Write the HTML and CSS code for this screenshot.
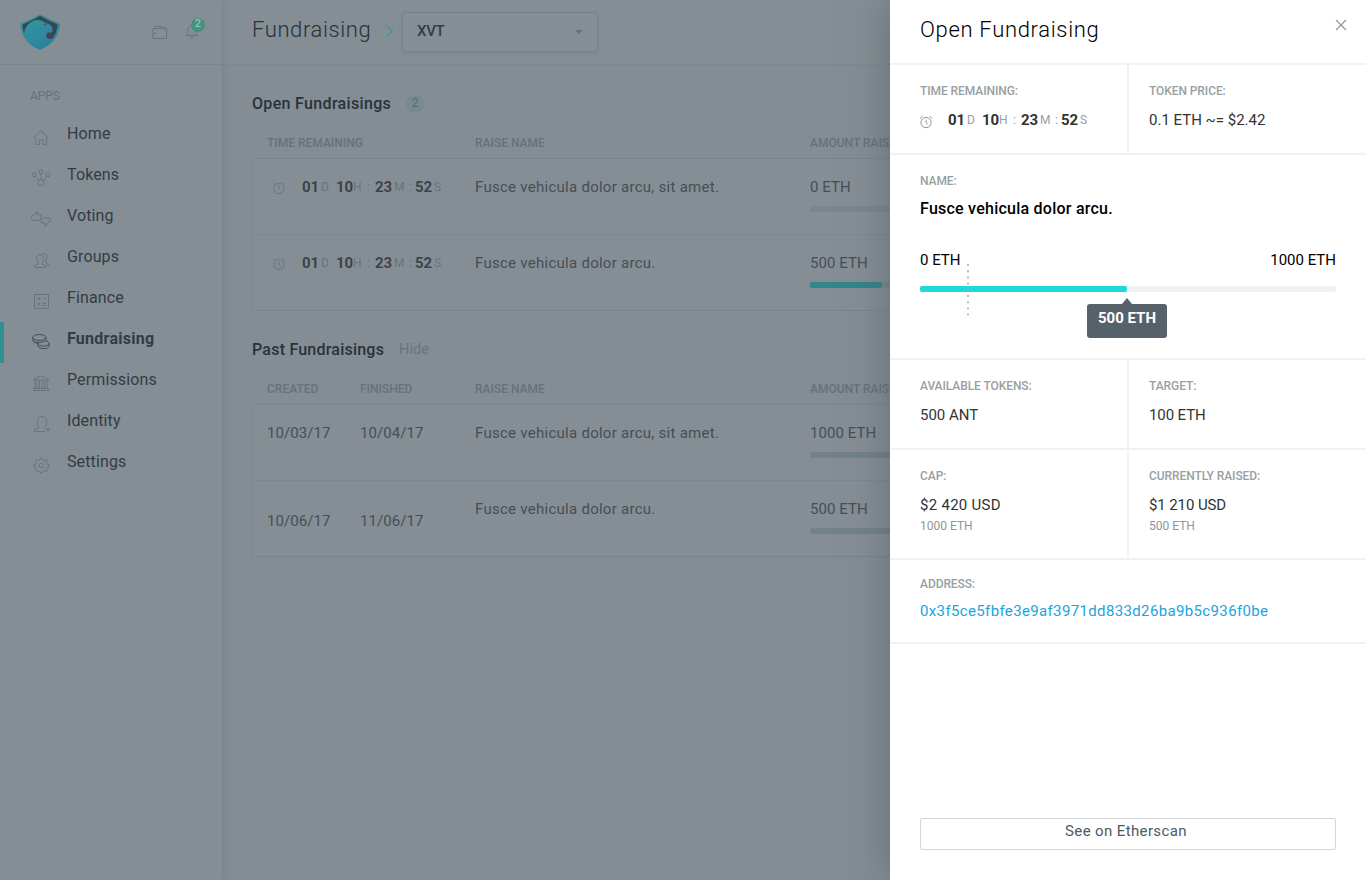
FILE: index.html
```html
<!DOCTYPE html>
<html lang="en">
<head>
<meta charset="utf-8">
<title>Fundraising</title>
<link rel="stylesheet" href="styles.css">
</head>
<body>
<svg class="defs" width="0" height="0">
  <symbol id="clock" viewBox="0 0 14 14"><circle cx="7" cy="7.6" r="5.1"/><path d="M7 4.6v3l1.8 1.5M1 3.4 3.5 1.2M13 3.4l-2.5-2.2"/></symbol>
</svg>
<div class="app">
  <aside class="sidebar">
    <div class="brand">
      <svg class="logo" width="40" height="36" viewBox="0 0 40 36">
        <defs><linearGradient id="lg" x1="0" y1="0" x2=".6" y2="1"><stop offset="0" stop-color="#369ca1"/><stop offset="1" stop-color="#2b80a1"/></linearGradient></defs>
        <path d="M20 0Q30 6 40 9.5 39 28 20 36 1 28 0 9.5 10 6 20 0Z" fill="url(#lg)"/>
        <path d="M20 1.8Q29 7 37.7 10.5 36.500 21 31.500 25 27 25.500 26 22 26 18.500 29 18.500 31.500 19 32.500 17.500 33.500 10.500 25.500 9 21 4.800 14 6.500 5.500 9.500 4 19.500 2.700 15.500 2.300 10.500 11 7 20 1.800Z" fill="#39474f"/>
        <path d="M12 15.500Q11 20 16 21.500 22 22 27 20L29 12.500 19 14Z" fill="#2f8b9e" opacity=".55"/>
        <path d="m23 10 4 .7-2 .8z" fill="#39474f"/>
      </svg>
      <svg class="ic wallet" width="16" height="15" viewBox="0 0 16 15"><path d="M.9 3.700h13.700v9.800H.9zM2.700 3.500V1.100l11 1.600v1M2.800 7.500h1v1h-1z"/></svg>
      <div class="bell">
        <svg class="ic" width="14" height="16" viewBox="0 0 14 16"><path d="M1 12.500c2-1.500 2-3 2-5.500C3 4 4.500 2.500 6.800 2.500S10.600 4 10.600 7c0 2.500.2 4 2.200 5.500zM4.800 12.800c.5 2.500 3.600 2.500 4.100 0M6.800 2.500V1"/></svg>
        <span class="bell-count">2</span>
      </div>
    </div>
    <div class="apps">APPS</div>
    <nav class="nav">
      <a class="item"><svg class="ic" width="22" height="20" viewBox="0 0 22 20"><path d="M4 11.500 11 4.500l7.200 7-1 1-.7-.6v6.600h-3.500v-4.700H9.300v4.700H5.700v-6.600l-.7.600z"/></svg><span>Home</span></a>
      <a class="item"><svg class="ic" width="22" height="20" viewBox="0 0 22 20"><circle cx="11" cy="15.700" r="3"/><circle cx="11" cy="4.700" r="2"/><circle cx="4" cy="7.700" r="2"/><circle cx="18" cy="7.700" r="2"/><path d="M11 6.700v6M5.200 9.300l3.500 4.200M16.800 9.300l-3.500 4.200"/></svg><span>Tokens</span></a>
      <a class="item"><svg class="ic" width="22" height="20" viewBox="0 0 22 20"><path d="m1.500 8.500 3-2 1.800-3 1 .3-.3 2.700 4.300.4-.8 4.300-1.500 1.300H4L1.500 11zM20.500 13.500l-3 1.500-1.700 3.500-1-.3.200-3.200-4-.5.800-3.500 1.700-1.200 5.500.7 1.500.7z"/></svg><span>Voting</span></a>
      <a class="item"><svg class="ic" width="22" height="20" viewBox="0 0 22 20"><path d="M4.700 18.500v-1.700l3.500-1.600v-1.500C5 9 6.800 5.800 10 5.800s5 3.200 2 7.900v1.500l3.700 1.600v1.700zM11.500 5.500c1.500-1.800 6-1 5.500 2.500-.2 2.200-1 3-1.500 4.300v1.200l3 1.700v1.300h-2.200"/></svg><span>Groups</span></a>
      <a class="item"><svg class="ic" width="22" height="20" viewBox="0 0 22 20"><path d="M4.500 4.500h14v14h-14zM7.500 8.500h3M9 7v3M13 8.500h3M7.600 13l2.600 2.600M10.200 13l-2.600 2.600M13 13.500h3M13 15.500h3"/></svg><span>Finance</span></a>
      <a class="item active"><svg class="ic" width="22" height="20" viewBox="0 0 22 20"><ellipse cx="9.300" cy="6.500" rx="6.600" ry="3"/><path d="M2.700 6.500v2c0 1.800 3 3 6 3M2.900 9.500c1 2.200 4 3 5.800 3M15.900 6.500v3"/><path d="M15.500 9.800c2 .3 3.600 1.400 3.600 2.700 0 1.600-2.700 2.500-5.800 2.500-3.300 0-5.500-1-5.500-2.500 0-.5.200-1 .8-1.400 2 .5 5.300 0 6.900-1.300zM8 13v2c.8 3.500 10.500 3.500 11.100 0v-2.500"/></svg><span>Fundraising</span></a>
      <a class="item"><svg class="ic" width="22" height="20" viewBox="0 0 22 20"><path d="M3.500 8V7L11 4l7.500 3v1zM3.500 18.500v-2h15v2zM5 8v8.500M7 8v8.500M9.500 8v8.500M12 8v8.500M14.500 8v8.500M17 8v8.500"/></svg><span>Permissions</span></a>
      <a class="item"><svg class="ic" width="22" height="20" viewBox="0 0 22 20"><path d="M15.500 18.500h-11v-1.700c2-1.200 4.500-1.200 4.500-2.500C6 10 7 3.500 12 3.500s6 6.500 3 10.800v1.200M16 16.500h4M18 14.500v4"/></svg><span>Identity</span></a>
      <a class="item"><svg class="ic" width="22" height="20" viewBox="0 0 22 20"><path d="m10.300 4h2l.4 2 1.600.7 1.800-1.200 1.400 1.400-1.200 1.800.7 1.600 2 .4v2l-2 .4-.7 1.600 1.200 1.800-1.400 1.400-1.800-1.200-1.600.7-.4 1.600h-2l-.4-1.600-1.600-.7-1.800 1.200-1.400-1.400 1.200-1.800-.7-1.600-1.800-.4v-2l1.800-.4.700-1.600-1.200-1.800 1.400-1.400 1.800 1.200 1.600-.7z"/><circle cx="11.300" cy="11.700" r="2.200"/></svg><span>Settings</span></a>
    </nav>
  </aside>
  <main class="main">
    <header class="top">
      <h1 class="title">Fundraising</h1>
      <svg class="chev" width="9" height="14" viewBox="0 0 9 14"><path d="m1 1 6.300 6L1 13"/></svg>
      <div class="select"><span>XVT</span><i class="caret"></i></div>
    </header>
    <div class="content">
      <h2 class="heading">Open Fundraisings <span class="badge">2</span></h2>
      <div class="cols"><span class="wide">TIME REMAINING</span><span>RAISE NAME</span><span>AMOUNT RAISED</span></div>
      <div class="table">
        <div class="row">
          <div class="time wide"><svg class="clock" width="14" height="14"><use href="#clock"/></svg><span class="digits"><b>01</b><i>D</i><b>10</b><i>H</i><i>:</i><b>23</b><i>M</i><i>:</i><b>52</b><i>S</i></span></div>
          <div>Fusce vehicula dolor arcu, sit amet.</div>
          <div>0 ETH<div class="bar"></div></div>
        </div>
        <div class="row">
          <div class="time wide"><svg class="clock" width="14" height="14"><use href="#clock"/></svg><span class="digits"><b>01</b><i>D</i><b>10</b><i>H</i><i>:</i><b>23</b><i>M</i><i>:</i><b>52</b><i>S</i></span></div>
          <div>Fusce vehicula dolor arcu.</div>
          <div>500 ETH<div class="bar"><div class="fill" style="width:50%"></div></div></div>
        </div>
      </div>
      <h2 class="heading past">Past Fundraisings <span class="hide">Hide</span></h2>
      <div class="cols"><span>CREATED</span><span>FINISHED</span><span>RAISE NAME</span><span>AMOUNT RAISED</span></div>
      <div class="table">
        <div class="row">
          <div class="date">10/03/17</div><div class="date">10/04/17</div>
          <div>Fusce vehicula dolor arcu, sit amet.</div>
          <div>1000 ETH<div class="bar done"></div></div>
        </div>
        <div class="row">
          <div class="date low">10/06/17</div><div class="date low">11/06/17</div>
          <div>Fusce vehicula dolor arcu.</div>
          <div>500 ETH<div class="bar done"></div></div>
        </div>
      </div>
    </div>
  </main>
</div>
<section class="panel">
  <header class="panel-head">
    <h2 class="panel-title">Open Fundraising</h2>
    <svg class="close" width="12" height="12" viewBox="0 0 12 12"><path d="m1 1 10 10M11 1 1 11"/></svg>
  </header>
  <div class="pair">
    <div class="cell"><div class="label">TIME REMAINING:</div>
      <div class="time"><svg class="clock" width="14" height="14"><use href="#clock"/></svg><span class="digits"><b>01</b><i>D</i><b>10</b><i>H</i><i>:</i><b>23</b><i>M</i><i>:</i><b>52</b><i>S</i></span></div></div>
    <div class="cell"><div class="label">TOKEN PRICE:</div><div class="value">0.1 ETH ~= $2.42</div></div>
  </div>
  <div class="name-box">
    <div class="label">NAME:</div>
    <div class="name">Fusce vehicula dolor arcu.</div>
    <div class="range"><span>0 ETH</span><span>1000 ETH</span></div>
    <div class="progress">
      <div class="progress-fill"></div>
      <svg class="marker" width="2" height="52" viewBox="0 0 2 52"><path d="M1 0v52"/></svg>
      <div class="tip">500 ETH</div>
    </div>
  </div>
  <div class="pair">
    <div class="cell"><div class="label">AVAILABLE TOKENS:</div><div class="value">500 ANT</div></div>
    <div class="cell"><div class="label">TARGET:</div><div class="value flat">100 ETH</div></div>
  </div>
  <div class="pair tall">
    <div class="cell"><div class="label">CAP:</div><div class="value spaced">$2 420 USD</div><div class="sub">1000 ETH</div></div>
    <div class="cell"><div class="label">CURRENTLY RAISED:</div><div class="value flat">$1 210 USD</div><div class="sub">500 ETH</div></div>
  </div>
  <div class="address"><div class="label">ADDRESS:</div><a class="hash">0x3f5ce5fbfe3e9af3971dd833d26ba9b5c936f0be</a></div>
  <button class="scan">See on Etherscan</button>
</section>
</body>
</html>
```
FILE: styles.css
```css
* { box-sizing: border-box; }
body { margin: 0; height: 880px; overflow: hidden; position: relative; background: #848d93; font: 15px/20px Roboto, sans-serif; color: #454e56; }
h1, h2 { margin: 0; font-weight: 400; }
i { font-style: normal; }
svg { display: block; flex: none; }
.defs { position: absolute; }
.app { display: flex; height: 880px; }

.sidebar { width: 222px; flex: none; background: #868e95; box-shadow: 1px 0 6px rgba(90,105,110,.32); position: relative; }
.brand { height: 65px; border-bottom: 1px solid #7b868c; display: flex; padding: 14px 0 0 20px; }
.ic { fill: none; stroke: #67747a; stroke-width: 1; }
.wallet { margin: 11px 0 0 92px; }
.bell { position: relative; margin: 9px 0 0 17px; }
.bell-count { position: absolute; left: 6px; top: -5px; width: 14px; height: 14px; border-radius: 50%; background: #41947d; color: #aab9b8; font-size: 11px; line-height: 12px; font-weight: 500; text-align: center; }
.apps { padding: 21px 0 0 30px; font-size: 12px; letter-spacing: -.1px; color: #667279; }
.nav { padding-top: 11px; }
.item { height: 41px; display: flex; padding: 7px 0 0 30px; gap: 15px; font-size: 16px; color: #323c45; letter-spacing: .12px; border-left: 0 solid #2f8f91; }
.item .ic { margin-top: 2px; }
.item.active { border-left-width: 4px; padding-left: 26px; font-weight: 700; letter-spacing: .26px; }
.active .ic { stroke: #454e56; }

.main { flex: 1; min-width: 0; overflow: hidden; }
.top { height: 65px; border-bottom: 1px solid #7d898e; background: #858e94; display: flex; padding-left: 30px; }
.title { width: 133px; margin-top: 15px; font-size: 22px; line-height: 30px; font-weight: 300; letter-spacing: .6px; color: #293138; }
.chev { margin-top: 24px; width: 9px; fill: none; stroke: #35999c; stroke-width: 1.1; }
.select { margin: 12px 0 0 8px; width: 196px; height: 40px; border: 1px solid #778187; border-radius: 2px; box-shadow: 0 2px 4px rgba(90,100,106,.14); display: flex; justify-content: space-between; padding: 8px 14px 0; font-weight: 500; letter-spacing: -.4px; color: #333c44; }
.caret { margin-top: 9px; width: 0; height: 0; border: 4.500px solid transparent; border-top-color: #667278; border-bottom: 0; }
.content { padding: 27px 0 0 30px; }
.heading { display: flex; height: 23px; align-items: center; font-size: 16px; font-weight: 500; letter-spacing: .33px; color: #29323a; }
.badge { margin-left: 15px; width: 18px; height: 18px; border-radius: 50%; background: #788a8f; color: #59696f; font-size: 12px; line-height: 17px; font-weight: 400; text-align: center; letter-spacing: 0; }
.past { margin-top: 27px; letter-spacing: .22px; }
.hide { margin-left: 15px; font-size: 14.500px; font-weight: 400; letter-spacing: 0; color: #67747b; }
.cols, .row { display: grid; grid-template-columns: 93px 115px 335px 144px; }
.cols { margin: 18px 0 5px; padding-left: 15px; font-size: 12px; font-weight: 500; color: #667279; }
.wide { grid-column: span 2; }
.table { width: 1080px; border: 1px solid #7b858b; border-radius: 2px; background: #868e95; }
.row { height: 75px; padding: 18px 0 0 14px; letter-spacing: .27px; }
.row + .row { height: 76px; padding-top: 18px; border-top: 1px solid #7f888e; }
.row > :last-child, .date { letter-spacing: .05px; }
.low { padding-top: 12px; }
.bar { margin-top: 9px; height: 6px; border-radius: 2px; background: #7b878d; }
.bar.done { background: #728287; }
.fill { height: 6px; border-radius: 2px; background: #308688; }
.time { display: flex; letter-spacing: 0; }
.clock { fill: none; stroke: #67747a; stroke-width: 1; margin: 4px 0 0 5px; }
.digits { display: grid; grid-template-columns: 19px 15px 17px 14px 8px 19px 15px 6px 19px auto; margin-left: 16px; }
.digits b { font-weight: 700; color: #3b444c; }
.digits i { font-size: 12px; color: #67747a; line-height: 21px; }

.panel { position: absolute; left: 890px; top: 0; width: 476px; height: 880px; background: #fff; box-shadow: -4px 0 36px rgba(75,90,95,.5); display: flex; flex-direction: column; color: #333; }
.panel-head { height: 65px; border-bottom: 2px solid #f2f2f2; padding: 15px 19px 0 30px; display: flex; justify-content: space-between; }
.panel-title { font-size: 22px; line-height: 30px; font-weight: 300; letter-spacing: .68px; color: #000; }
.close { margin-top: 4px; fill: none; stroke: #8d979b; stroke-width: 1.2; }
.pair { height: 90px; display: grid; grid-template-columns: 239px 1fr; border-bottom: 2px solid #f2f2f2; }
.tall { height: 110px; }
.cell { padding: 16px 0 0 20px; }
.cell:first-child { padding-left: 30px; border-right: 2px solid #f2f2f2; }
.label { margin-bottom: 9px; font-size: 12px; font-weight: 500; letter-spacing: -.08px; color: #98a0a2; }
.spaced { letter-spacing: .28px; }
.flat { letter-spacing: -.1px; }
.sub { margin-top: 1px; font-size: 12px; color: #8d9698; }
.panel .clock { margin-left: -1px; margin-top: 5px; stroke: #8d979b; }
.panel .digits { margin-left: 15px; }
.panel .digits b { color: #333; }
.panel .digits i { color: #98a0a2; }
.name-box { height: 205px; padding: 16px 30px 0; border-bottom: 2px solid #f2f2f2; }
.name-box .label { margin-bottom: 8px; }
.name { font-size: 16px; font-weight: 500; letter-spacing: .24px; color: #000; }
.range { display: flex; justify-content: space-between; margin: 31px 0 16px; color: #000; }
.progress { position: relative; height: 6px; border-radius: 2px; background: #edf2f6; }
.progress-fill { width: 207px; height: 6px; border-radius: 2px; background: #1ddad8; }
.marker { position: absolute; left: 47px; top: -22px; fill: none; stroke: #a7adaf; stroke-opacity: .8; stroke-width: 2; stroke-dasharray: 2 4.200; }
.tip { position: absolute; left: 167px; top: 18px; width: 80px; height: 34px; border-radius: 3px; background: #57616a; color: #fff; font-weight: 700; text-align: center; line-height: 28px; }
.tip::before { content: ""; position: absolute; left: 35px; top: -6px; border: 5px solid transparent; border-bottom: 6px solid #57616a; border-top: 0; }
.address { height: 84px; padding: 14px 30px 0; border-bottom: 2px solid #f2f2f2; }
.address .label { margin-bottom: 7px; }
.hash { letter-spacing: .36px; color: #20a4e0; }
.scan { margin: auto 30px 30px; height: 32px; padding: 0 4px 6px 0; border: 1px solid #d5d8da; border-radius: 2px; background: #fff; font: 15px/20px Roboto, sans-serif; letter-spacing: .37px; color: #4d5963; }
```
